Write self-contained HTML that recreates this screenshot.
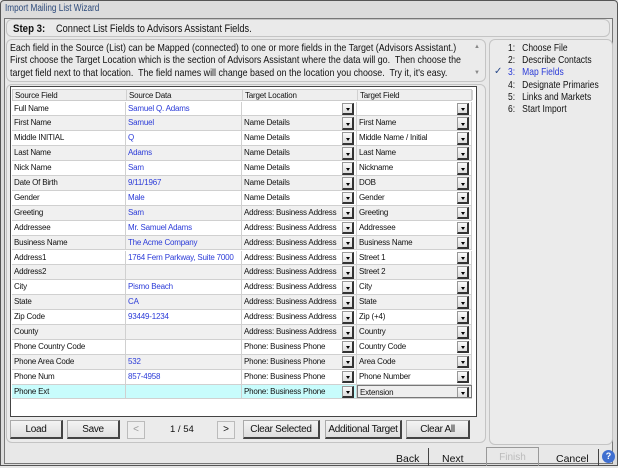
<!DOCTYPE html>
<html><head><style>
*{box-sizing:border-box;margin:0;padding:0}
body{width:618px;height:466px;overflow:hidden;background:#e6e6e6;font-family:"Liberation Sans",sans-serif;position:relative;font-size:11px;color:#111}
.a{position:absolute;white-space:nowrap}
.sx{transform-origin:0 0}
.win{left:0;top:0;width:618px;height:466px;border:1px solid #555;border-radius:4px 4px 0 0;background:#dcdcdc}
.inner{left:4px;top:18px;width:609px;height:446px;background:#e8e8e8;border:1px solid #777}
.box{border:1px solid #c4c4c4;border-radius:6px;background:#ebebeb}
.btn{background:linear-gradient(#f4f4f4,#dedede);border:1px solid #aaa;border-right:2px solid #444;border-bottom:2px solid #444;text-align:center;font-size:10px;line-height:17px;letter-spacing:-0.3px}
.row{position:absolute;left:12px;width:460px;height:14.9px;font-size:8px;letter-spacing:-0.2px;line-height:14px;border-bottom:1px solid #d0d0d0}
.c{position:absolute;top:0;height:100%;padding-left:2px;border-right:1px solid #d0d0d0;white-space:nowrap;overflow:hidden}
.c1{left:0;width:114px}.c2{left:114px;width:116px;color:#2b3bd8}.c3{left:230px;width:115px}.c4{left:345px;width:115px}
.dd{position:absolute;top:1px;right:2px;width:12px;height:12.5px;background:linear-gradient(#fafafa,#ddd);border:1px solid #999;border-right:2px solid #333;border-bottom:2px solid #333}
.dd:after{content:"";position:absolute;left:3px;top:4.5px;border-left:2.5px solid transparent;border-right:2.5px solid transparent;border-top:3px solid #000}
</style></head><body>
<div class="a win"></div>
<div class="a sx" style="left:5px;top:3px;font-size:10px;color:#2c4a7a;transform:scaleX(0.82)">Import Mailing List Wizard</div>
<div class="a inner"></div>
<div class="a box" style="left:6px;top:19px;width:604px;height:18px;background:#eaeaea"></div>
<div class="a sx" style="left:13px;top:23px;font-size:11px;font-weight:bold;transform:scaleX(0.88)">Step 3:</div>
<div class="a sx" style="left:56px;top:23px;font-size:11px;transform:scaleX(0.84)">Connect List Fields to Advisors Assistant Fields.</div>
<div class="a box" style="left:6px;top:39px;width:480px;height:43px"></div>
<div class="a sx" style="left:10px;top:42px;font-size:10.5px;line-height:12.3px;transform:scaleX(0.845)">Each field in the Source (List) can be Mapped (connected) to one or more fields in the Target (Advisors Assistant.)<br>First choose the Target Location which is the section of Advisors Assistant where the data will go.&nbsp; Then choose the<br>target field next to that location.&nbsp; The field names will change based on the location you choose.&nbsp; Try it, it's easy.</div>
<div class="a" style="left:474px;top:44px;font-size:6px;color:#888">▲</div>
<div class="a" style="left:474px;top:70px;font-size:6px;color:#888">▼</div>
<div class="a box" style="left:489px;top:39px;width:124px;height:406px"></div>
<div class="a sx" style="left:508px;top:42px;font-size:10.5px;line-height:12.2px;transform:scaleX(0.81)">1:&nbsp;&nbsp; Choose File<br>2:&nbsp;&nbsp; Describe Contacts<br><span style="color:#2b3bd8">3:&nbsp;&nbsp; Map Fields</span><br>4:&nbsp;&nbsp; Designate Primaries<br>5:&nbsp;&nbsp; Links and Markets<br>6:&nbsp;&nbsp; Start Import</div>
<div class="a" style="left:494px;top:66px;font-size:10px;color:#2b4b8a">✓</div>
<div class="a box" style="left:6px;top:84px;width:480px;height:359px"></div>
<div class="a" style="left:10px;top:86px;width:467px;height:331px;background:#fff;border:1px solid #444"></div>
<div class="row" style="top:89px;height:12px;line-height:11px;background:#eee;border:1px solid #ccc"><div class="c c1">Source Field</div><div class="c c2" style="color:#111">Source Data</div><div class="c c3">Target Location</div><div class="c c4">Target Field</div></div>
<div id="rows"></div>
<div class="a btn" style="left:10px;top:420px;width:53px;height:19px">Load</div>
<div class="a btn" style="left:67px;top:420px;width:53px;height:19px">Save</div>
<div class="a" style="left:127px;top:421px;width:18px;height:18px;background:#eee;border:1px solid #bbb;font-size:10px;color:#999;text-align:center;line-height:16px">&lt;</div>
<div class="a" style="left:170px;top:424px;font-size:9.5px">1 / 54</div>
<div class="a" style="left:217px;top:421px;width:18px;height:18px;background:#eee;border:1px solid #bbb;font-size:10px;text-align:center;line-height:16px">&gt;</div>
<div class="a btn" style="left:243px;top:420px;width:77px;height:19px">Clear Selected</div>
<div class="a btn" style="left:325px;top:420px;width:77px;height:19px">Additional Target</div>
<div class="a btn" style="left:406px;top:420px;width:64px;height:19px">Clear All</div>
<div class="a" style="left:396px;top:453px;font-size:10.5px">Back</div>
<div class="a" style="left:428px;top:448px;width:1px;height:18px;background:#444"></div>
<div class="a" style="left:442px;top:453px;font-size:10.5px">Next</div>
<div class="a" style="left:486px;top:447px;width:53px;height:19px;border:1px solid #999;border-bottom:none;color:#bbb;text-align:center;font-size:10px;line-height:20px">Finish</div>
<div class="a" style="left:556px;top:453px;font-size:10.5px">Cancel</div>
<div class="a" style="left:598px;top:449px;width:1px;height:17px;background:#444"></div>
<div class="a" style="left:602px;top:450px;width:13px;height:13px;border-radius:50%;background:#3f6fd0;color:#fff;font-size:9px;text-align:center;line-height:13px;font-weight:bold">?</div>
<script>
var d=[["Full Name","Samuel Q. Adams","",""],["First Name","Samuel","Name Details","First Name"],["Middle INITIAL","Q","Name Details","Middle Name / Initial"],["Last Name","Adams","Name Details","Last Name"],["Nick Name","Sam","Name Details","Nickname"],["Date Of Birth","9/11/1967","Name Details","DOB"],["Gender","Male","Name Details","Gender"],["Greeting","Sam","Address: Business Address","Greeting"],["Addressee","Mr. Samuel Adams","Address: Business Address","Addressee"],["Business Name","The Acme Company","Address: Business Address","Business Name"],["Address1","1764 Fern Parkway, Suite 7000","Address: Business Address","Street 1"],["Address2","","Address: Business Address","Street 2"],["City","Pismo Beach","Address: Business Address","City"],["State","CA","Address: Business Address","State"],["Zip Code","93449-1234","Address: Business Address","Zip (+4)"],["County","","Address: Business Address","Country"],["Phone Country Code","","Phone: Business Phone","Country Code"],["Phone Area Code","532","Phone: Business Phone","Area Code"],["Phone Num","857-4958","Phone: Business Phone","Phone Number"],["Phone Ext","","Phone: Business Phone","Extension"]];
var h="";
d.forEach(function(r,i){var top=101.5+i*14.9;var bg=i==19?"#c8fcfc":(i%2?"#f0f0f0":"#fff");
h+='<div class="row" style="top:'+top+'px;background:'+bg+'"><div class="c c1">'+r[0]+'</div><div class="c c2">'+r[1]+'</div><div class="c c3">'+r[2]+'<span class="dd"></span></div><div class="c c4"'+(i==19?' style="background:#eee;border:1px solid #777"':'')+'>'+r[3]+'<span class="dd"></span></div></div>';});
document.getElementById("rows").innerHTML=h;
</script>
</body></html>
